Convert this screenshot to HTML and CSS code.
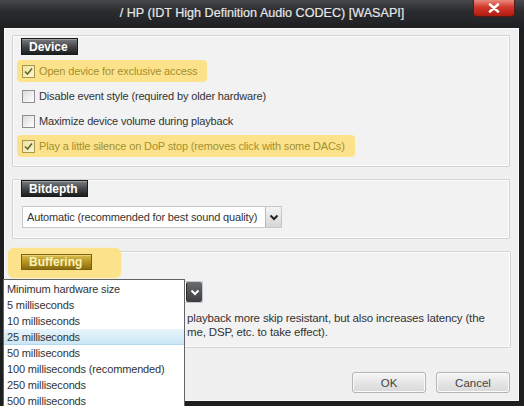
FILE: index.html
```html
<!DOCTYPE html>
<html lang="en">
<head>
  <meta charset="UTF-8">
  <title>Output device settings</title>
  <link rel="stylesheet" href="styles.css">
</head>
<body>

<div class="window">

  <!-- Title bar -->
  <div class="titlebar">
    <span class="title">/ HP (IDT High Definition Audio CODEC) [WASAPI]</span>
    <span class="close">
      <svg width="12" height="10" viewBox="0 0 12 10"><path d="M2 1.5 L10 8.5 M10 1.5 L2 8.5" stroke="#fff" stroke-width="2.6" stroke-linecap="round"/></svg>
    </span>
  </div>

  <div class="client">

    <!-- Device -->
    <div class="group">
      <span class="tab">Device</span>
      <label class="row hl first">
        <span class="check on"><svg width="11" height="11" viewBox="0 0 11 11"><path d="M2 5.5 L4.5 8 L9 2.5" fill="none" stroke="#5e6b2c" stroke-width="1.6"/></svg></span>
        Open device for exclusive access
      </label>
      <label class="row">
        <span class="check"></span>
        Disable event style (required by older hardware)
      </label>
      <label class="row">
        <span class="check"></span>
        Maximize device volume during playback
      </label>
      <label class="row hl">
        <span class="check on"><svg width="11" height="11" viewBox="0 0 11 11"><path d="M2 5.5 L4.5 8 L9 2.5" fill="none" stroke="#5e6b2c" stroke-width="1.6"/></svg></span>
        Play a little silence on DoP stop (removes click with some DACs)
      </label>
    </div>

    <!-- Bitdepth -->
    <div class="group bitdepth">
      <span class="tab">Bitdepth</span>
      <div class="combo wide">
        <span class="combo-text">Automatic (recommended for best sound quality)</span>
        <span class="arrow">
          <svg width="10" height="7" viewBox="0 0 10 7"><path d="M1.5 1.5 L5 5 L8.5 1.5" fill="none" stroke="#222" stroke-width="2"/></svg>
        </span>
      </div>
    </div>

    <!-- Buffering (its combo is open, the list covers the left part) -->
    <div class="group buffering">
      <div class="glow"><span class="tab gold">Buffering</span></div>
      <div class="combo short">
        <span class="combo-text"></span>
        <span class="arrow dark">
          <svg width="10" height="7" viewBox="0 0 10 7"><path d="M1.5 1.5 L5 5 L8.5 1.5" fill="none" stroke="#fff" stroke-width="2"/></svg>
        </span>
      </div>
      <p class="desc">playback more skip resistant, but also increases latency (the<br>me, DSP, etc. to take effect).</p>
    </div>

    <div class="buttons">
      <button>OK</button>
      <button>Cancel</button>
    </div>

  </div>

  <!-- Open dropdown list -->
  <ul class="droplist">
    <li>Minimum hardware size</li>
    <li>5 milliseconds</li>
    <li>10 milliseconds</li>
    <li class="selected">25 milliseconds</li>
    <li>50 milliseconds</li>
    <li>100 milliseconds (recommended)</li>
    <li>250 milliseconds</li>
    <li>500 milliseconds</li>
  </ul>

</div>

</body>
</html>
```

FILE: styles.css
```css
/* Dialog */
body { margin: 0; background: #fff; font-family: "Liberation Sans", Arial, sans-serif; font-size: 11px; color: #333; letter-spacing: -0.15px; }

.window { position: relative; width: 524px; height: 406px; background: #1d1f21; display: flex; flex-direction: column; }

.titlebar { position: relative; height: 28px; display: flex; justify-content: center; align-items: center; background: linear-gradient(#45484c, #2a2c2f 40%, #1e2022); }
.title { color: #e6e6e6; font-size: 12.6px; letter-spacing: 0; padding-bottom: 2px; -webkit-text-stroke: 0.2px #e6e6e6; }
.close { position: absolute; right: 9px; top: 0; width: 42px; height: 17px; display: flex; justify-content: center; align-items: center; border-radius: 0 0 4px 4px; border: 1px solid #5a1a14; border-top: none; background: linear-gradient(#e98a7e, #d2382a 45%, #b01c10); box-sizing: border-box; }

.client { flex: 1; margin: 0 5px 5px 4px; padding: 7px 9px 0 8px; background: #f0f0f0; box-shadow: inset 0 0 0 1px #fafafa; display: flex; flex-direction: column; }

/* Group boxes */
.group { display: flex; flex-direction: column; align-items: flex-start; padding: 2px 8px 9px 8px; border: 1px solid #d3d3d3; border-radius: 2px; background: #f2f2f2; box-shadow: inset 0 0 0 1px #fcfcfc; }
.bitdepth { margin-top: 12px; padding-top: 0; padding-bottom: 10px; }
.buffering { margin-top: 12px; padding-top: 1px; padding-bottom: 8px; margin-right: -1px; }

.tab { height: 17px; line-height: 17px; padding: 0 9px 0 7px; font-size: 12px; font-weight: bold; letter-spacing: 0; color: #fff; background: linear-gradient(#7a7d81, #45484b 50%, #1c1d1f); border: 1px solid #1a1a1a; box-sizing: border-box; box-shadow: inset 0 1px 0 #9a9da0; }
.tab.gold { color: #fbf0b8; background: linear-gradient(#d8bd50, #b3941f 50%, #8a6d0e); border-color: #7a6010; box-shadow: inset 0 1px 0 #ead27a; }
.glow { margin: -5px 0 0 -13px; padding: 6px 29px 7px 13px; background: #fce38b; border-radius: 6px; box-shadow: 0 0 2px #fbe9a8; }

/* Checkbox rows */
.row { display: flex; align-items: center; gap: 4px; height: 22px; margin: 3px 0 0 -4px; padding: 0 10px 0 5px; border-radius: 4px; }
.row.first { margin-top: 5px; }
.row.hl { background: #fce38b; color: #a39030; }
.check { width: 13px; height: 13px; box-sizing: border-box; border: 1px solid #8f8f8f; background: linear-gradient(135deg, #dcdcdc, #fff); display: flex; justify-content: center; align-items: center; }
.row.hl .check { border-color: #a8994a; background: linear-gradient(135deg, #efe0a0, #fdf6d8); }

/* Combo boxes */
.combo { display: flex; height: 22px; margin: 9px 0 0 1px; border: 1px solid #c8c8c8; background: #fff; box-sizing: border-box; }
.combo.wide { width: 260px; }
.combo.short { width: 181px; margin-top: 3px; }
.combo-text { flex: 1; line-height: 20px; padding-left: 4px; white-space: nowrap; overflow: hidden; }
.arrow { width: 15px; flex: none; display: flex; justify-content: center; align-items: center; background: linear-gradient(#f4f4f4, #d6d6d6); border-left: 1px solid #bcbcbc; }
.arrow.dark { background: linear-gradient(#6a6d71, #3a3c3f); border-left-color: #2a2a2a; border-radius: 2px; }

.desc { margin: 8px 0 0 166px; line-height: 14px; font-size: 11.5px; }

/* Buttons */
.buttons { display: flex; justify-content: flex-end; gap: 10px; margin-top: 24px; }
.buttons button { width: 74px; height: 21px; font-family: inherit; font-size: 11.5px; color: #444; border: 1px solid #b4b4b4; border-radius: 3px; background: linear-gradient(#f6f6f6, #e6e6e6 50%, #d8d8d8); box-shadow: inset 0 0 0 1px #fbfbfb; }

/* Dropdown list */
.droplist { position: absolute; left: 3px; top: 279px; width: 182px; margin: 0; padding: 1px 0 0; list-style: none; background: #fff; border: 1px solid #646464; box-sizing: border-box; }
.droplist li { height: 16px; line-height: 16px; padding-left: 3px; }
.droplist li.selected { background: linear-gradient(#e8f4fb, #c8e6f6); box-shadow: inset 0 -1px 0 #b5d8ec; }
```
